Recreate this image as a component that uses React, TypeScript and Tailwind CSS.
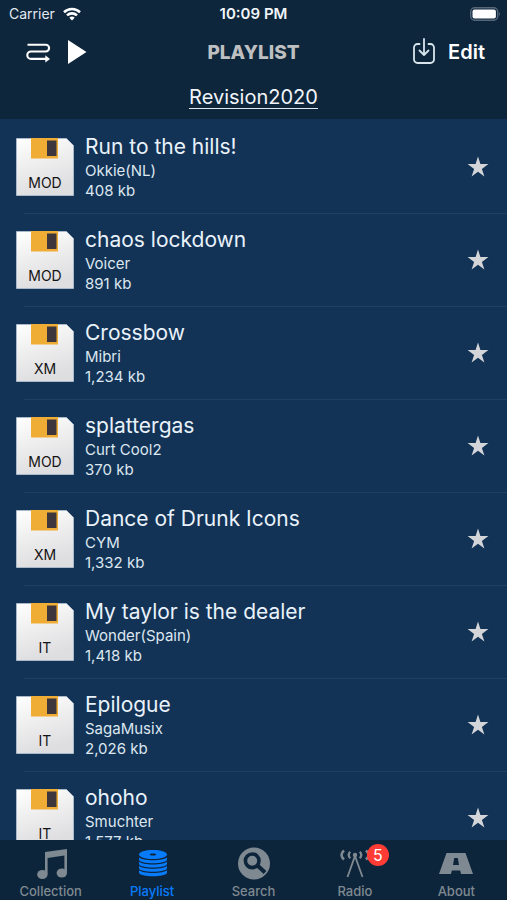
import type { ReactNode } from 'react';

interface Track {
  title: string;
  artist: string;
  size: string;
  format: string;
}

const tracks: Track[] = [
  { title: 'Run to the hills!', artist: 'Okkie(NL)', size: '408 kb', format: 'MOD' },
  { title: 'chaos lockdown', artist: 'Voicer', size: '891 kb', format: 'MOD' },
  { title: 'Crossbow', artist: 'Mibri', size: '1,234 kb', format: 'XM' },
  { title: 'splattergas', artist: 'Curt Cool2', size: '370 kb', format: 'MOD' },
  { title: 'Dance of Drunk Icons', artist: 'CYM', size: '1,332 kb', format: 'XM' },
  { title: 'My taylor is the dealer', artist: 'Wonder(Spain)', size: '1,418 kb', format: 'IT' },
  { title: 'Epilogue', artist: 'SagaMusix', size: '2,026 kb', format: 'IT' },
  { title: 'ohoho', artist: 'Smuchter', size: '1,577 kb', format: 'IT' },
];

function StatusBar() {
  return (
    <div className="grid h-7 grid-cols-3 items-center px-1.5 text-slate-200">
      <div className="flex items-center gap-2 pl-[3px] text-sm">
        <span>Carrier</span>
        <svg viewBox="0 0 18 14" className="h-3.5 w-[18px]" fill="none" stroke="white" strokeWidth="2.6">
          <path d="M1 5.2a11.5 11.5 0 0 1 16 0" />
          <path d="M4 8.4a7.3 7.3 0 0 1 10 0" />
          <path d="M9 13.5 6.3 10.8a4 4 0 0 1 5.4 0Z" fill="white" stroke="none" />
        </svg>
      </div>
      <span className="text-center text-[15px] font-semibold text-slate-100">10:09 PM</span>
      <svg viewBox="0 0 31 14" className="h-3.5 w-[31px] justify-self-end">
        <rect x="0.7" y="0.7" width="27" height="12.6" rx="4" fill="none" stroke="#566878" strokeWidth="1.4" />
        <rect x="2.5" y="2.5" width="23.4" height="9" rx="2" fill="white" />
        <path d="M29 4.8q1.8 2.2 0 4.4Z" fill="#667482" />
      </svg>
    </div>
  );
}

function Header() {
  return (
    <header className="shrink-0 bg-[#0d263c]">
      <StatusBar />
      <div className="grid h-12 grid-cols-3 items-center px-[22px]">
        <div className="flex items-center gap-3 pl-0.5">
          <button aria-label="Play order">
            <svg viewBox="0 0 28 22" className="h-[22px] w-7" fill="none" stroke="white" strokeWidth="2.1">
              <path d="M3.5 3.7h18.2a3.4 3.4 0 0 1 0 6.8H7a3.7 3.7 0 0 0 0 7.4h16" />
              <path d="m21.3 14.2 4.7 3.7-4.7 3.7Z" fill="white" stroke="none" />
            </svg>
          </button>
          <button aria-label="Play">
            <svg viewBox="0 0 24 24" className="h-6 w-6" fill="white">
              <path d="M4 0v24l18.5-12Z" />
            </svg>
          </button>
        </div>
        <h1 className="pt-0.5 text-center text-[19px] font-extrabold text-[#bebfc1]">PLAYLIST</h1>
        <div className="flex items-center justify-end gap-3">
          <button aria-label="Import">
            <svg viewBox="0 0 24 28" className="h-7 w-6" fill="none" stroke="#d9e5ec" strokeWidth="1.8" strokeLinecap="round" strokeLinejoin="round">
              <path d="M7.5 6h-2A3.5 3.5 0 0 0 2 9.500v12A3.500 3.500 0 0 0 5.500 25h13a3.500 3.500 0 0 0 3.500-3.500v-12A3.500 3.500 0 0 0 18.500 6h-2" />
              <path d="M12 1v16m-4.500-4.500L12 17l4.500-4.500" />
            </svg>
          </button>
          <button className="text-xl font-semibold text-white">Edit</button>
        </div>
      </div>
      <div className="flex h-[43px] items-center justify-center">
        <a href="#playlist" className="border-b border-slate-200 text-xl leading-[22px] text-slate-100">Revision2020</a>
      </div>
    </header>
  );
}

function Floppy({ format }: { format: string }) {
  return (
    <svg viewBox="0 0 60 60" className="h-[60px] w-[60px] shrink-0">
      <defs>
        <linearGradient id="disk" x1="0" y1="0" x2="0.3" y2="1">
          <stop offset="0" stopColor="#ffffff" />
          <stop offset="1" stopColor="#dedddf" />
        </linearGradient>
      </defs>
      <path d="M1.500 1.500h50l7 7v50h-57Z" fill="url(#disk)" stroke="#a9b9c9" />
      <path d="M16 1h27v20.500H16Z" fill="#f0ad36" />
      <path d="M32 3.500h9.500v15.500H32Z" fill="#3d373d" />
      <text x="30" y="51" textAnchor="middle" fontSize="14" fill="#141414">{format}</text>
    </svg>
  );
}

function TrackRow({ track }: { track: Track }) {
  return (
    <li className="flex h-[93px] flex-col">
      <div className="flex flex-1 items-center pl-[15px] pr-[18px]">
        <Floppy format={track.format} />
        <div className="ml-2.5 flex-1">
          <h2 className="text-[21px] leading-7 text-[#e9f2fa]">{track.title}</h2>
          <p className="text-[15px] leading-5 text-[#dce7f0]">{track.artist}</p>
          <p className="text-[15px] leading-5 text-[#dce7f0]">{track.size}</p>
        </div>
        <button aria-label={`Favourite ${track.title}`}>
          <svg viewBox="0 0 22 22" className="h-[22px] w-[22px]" fill="#d3d5d9">
            <path d="m11 .5 2.400 7.600h8l-6.500 4.800 2.500 7.700-6.400-4.800-6.400 4.800 2.500-7.700L.6 8.100h8Z" />
          </svg>
        </button>
      </div>
      <div className="ml-6 h-px bg-[#213f60]" />
    </li>
  );
}

interface TabProps {
  label: string;
  active?: boolean;
  badge?: number;
  children: ReactNode;
}

function Tab({ label, active, badge, children }: TabProps) {
  return (
    <button className={`flex flex-1 flex-col items-center pt-1.5 ${active ? 'text-[#087bfa]' : 'text-[#7f8991]'}`}>
      <span className="relative">
        <svg viewBox="0 0 36 36" className="h-9 w-9" fill="currentColor">
          {children}
        </svg>
        {badge && (
          <span className="absolute -right-4 -top-0.5 flex h-[22px] w-[22px] items-center justify-center rounded-full bg-[#ff3b35] text-base text-white">
            {badge}
          </span>
        )}
      </span>
      <span className="text-[13px] leading-[18px] font-medium">{label}</span>
    </button>
  );
}

function TabBar() {
  return (
    <nav className="flex h-[60px] shrink-0 bg-[#0d253b]">
      <Tab label="Collection">
        <path d="M12 6 34 3v24h-2.600V9.500L14.600 12V28H12Z" />
        <ellipse cx="9.400" cy="28.500" rx="5.200" ry="4.600" />
        <ellipse cx="28.800" cy="27" rx="5.200" ry="4.600" />
      </Tab>
      <Tab label="Playlist" active>
        <path
          fillRule="evenodd"
          d="M19 4c8 0 14 2 14 4.500S27 13 19 13 5 11 5 8.500 11 4 19 4Zm0 3.400c-2 0-3.200.5-3.200 1.100s1.200 1.100 3.200 1.100 3.200-.5 3.200-1.100-1.200-1.100-3.200-1.100Z"
        />
        <path d="M5 11.200c3 4 25 4 28 0v2.300c0 5-28 5-28 0Z" />
        <path d="M5 15.500c3 4 25 4 28 0v2.300c0 5-28 5-28 0Z" />
        <path d="M5 19.800c3 4 25 4 28 0v2.300c0 5-28 5-28 0Z" />
        <path d="M5 24.100c3 4 25 4 28 0v2.300c0 5-28 5-28 0Z" />
      </Tab>
      <Tab label="Search">
        <circle cx="18" cy="17.500" r="16" />
        <circle cx="16.200" cy="14.800" r="6.800" fill="none" stroke="#0d253b" strokeWidth="3.600" />
        <path d="m21.500 19.500 7.500 7" stroke="#0d253b" strokeWidth="4" />
      </Tab>
      <Tab label="Radio" badge={5}>
        <circle cx="18" cy="9" r="2.200" />
        <g fill="none" stroke="currentColor" strokeWidth="1.800">
          <path d="M10.500 31 18 10l7.500 21" />
          <path d="M13.200 5.800q-3 3.200 0 6.400M22.800 5.800q3 3.200 0 6.400" strokeWidth="2.200" />
          <path d="M7 4.500q-5 4.500 0 9M29 4.500q5 4.500 0 9" strokeWidth="2.600" />
        </g>
      </Tab>
      <Tab label="About">
        <path fillRule="evenodd" d="M8.500 7h19l7.500 21H23l-.8-3.500h-8.400L13 28H1Zm7.700 5-1.200 7h6l-1.200-7Z" />
      </Tab>
    </nav>
  );
}

export default function App() {
  return (
    <div className="flex h-screen flex-col overflow-hidden bg-[#133356] font-['Inter','Liberation_Sans',sans-serif]">
      <Header />
      <main className="min-h-0 flex-1 overflow-hidden">
        <ul className="pt-0.5">
          {tracks.map((track) => (
            <TrackRow key={track.title} track={track} />
          ))}
        </ul>
      </main>
      <TabBar />
    </div>
  );
}
